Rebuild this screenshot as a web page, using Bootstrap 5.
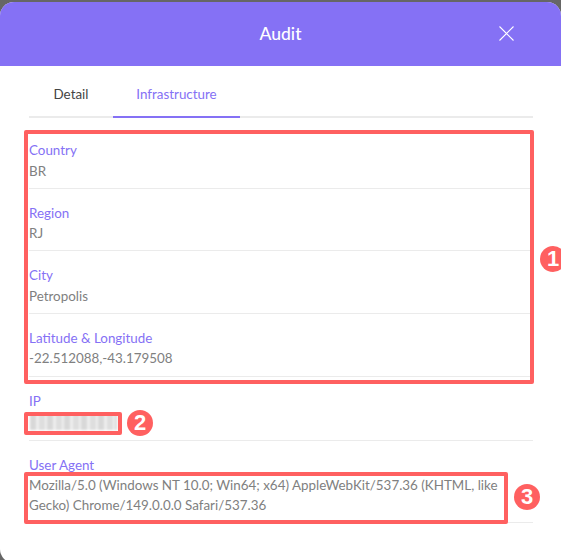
<!DOCTYPE html>
<html lang="en">
<head>
<meta charset="utf-8">
<title>Audit</title>
<link href="https://cdn.jsdelivr.net/npm/bootstrap@5.3.0/dist/css/bootstrap.min.css" rel="stylesheet">
<style>
html, body { background: #fff; }
body { font-family: "Lato", "Open Sans", sans-serif; }
.shot { width: 561px; height: 560px; background: #666; padding-top: 2px; overflow: hidden; position: relative; }
.sheet { background: #fff; border-radius: 14px 14px 0 14px; height: 561px; overflow: hidden; }
.sheet-head { background: #8571f5; height: 64px; color: #fff; font-size: 17.5px; font-weight: 500; }
.sheet-close { right: 47px; top: 24px; background: none; border: 0; padding: 0; line-height: 0; }
.sheet-body { padding: 13px 28px 0 29px; }
.tabs-line { border-bottom: 2px solid #ebebeb; height: 39px; font-size: 13.4px; }
.tab-item { display: block; height: 39px; width: 84px; text-align: center; line-height: 31px; color: #444; text-decoration: none; }
.tab-item.on { width: 127px; color: #8571f5; border-bottom: 2px solid #8571f5; }
.field-list { margin-top: 8px; }
.field { border-bottom: 1px solid #ebebeb; font-size: 13.4px; color: #808080; padding: 14px 0 7.17px; }
.field dt { font-weight: 400; color: #8571f5; margin: 0; line-height: 20px; }
.field dd { margin: 0; padding-top: .5px; line-height: 20px; }
.note { border: 4px solid #ff6060; border-radius: 2px; position: absolute; }
.note-a { left: 24px; top: 130px; width: 510px; height: 254px; }
.note-b { left: 24px; top: 412px; width: 98px; height: 23px; }
.note-c { left: 24px; top: 472px; width: 484px; height: 52px; }
.num { position: absolute; width: 26px; height: 26px; border-radius: 50%; background: #ff6060; color: #fff; font-weight: 700; font-size: 22px; line-height: 26px; text-align: center; font-family: "Liberation Sans", sans-serif; }
.num-a { left: 540px; top: 246px; }
.num-b { left: 127px; top: 410px; }
.num-c { left: 514px; top: 484px; }
.blurred { width: 87px; height: 16px; background: repeating-linear-gradient(90deg, #d8d8d8 0 6px, #eeeeee 6px 9px, #dedede 9px 15px, #f0f0f0 15px 17px); filter: blur(1.2px); margin: 3px 0 2.33px 1px; }
</style>
</head>
<body>
<div class="shot">
  <div class="sheet">
    <div class="sheet-head d-flex align-items-center justify-content-center position-relative">
      <span>Audit</span>
      <button class="sheet-close position-absolute" type="button" aria-label="Close">
        <svg width="15" height="15" viewBox="0 0 15 15"><path d="M.5.5 14.5 14.5M14.5.5.5 14.5" stroke="#fff" stroke-width="1.1" fill="none"/></svg>
      </button>
    </div>
    <div class="sheet-body">
      <nav class="tabs-line d-flex">
        <a class="tab-item" href="#">Detail</a>
        <a class="tab-item on" href="#">Infrastructure</a>
      </nav>
      <dl class="field-list mb-0 d-flex flex-column">
        <div class="field"><dt>Country</dt><dd>BR</dd></div>
        <div class="field"><dt>Region</dt><dd>RJ</dd></div>
        <div class="field"><dt>City</dt><dd>Petropolis</dd></div>
        <div class="field"><dt>Latitude &amp; Longitude</dt><dd>-22.512088,-43.179508</dd></div>
        <div class="field"><dt>IP</dt><dd><div class="blurred"></div></dd></div>
        <div class="field"><dt>User Agent</dt><dd>Mozilla/5.0 (Windows NT 10.0; Win64; x64) AppleWebKit/537.36 (KHTML, like Gecko) Chrome/149.0.0.0 Safari/537.36</dd></div>
      </dl>
    </div>
  </div>
  <div class="note note-a"></div>
  <div class="num num-a">1</div>
  <div class="note note-b"></div>
  <div class="num num-b">2</div>
  <div class="note note-c"></div>
  <div class="num num-c">3</div>
</div>
</body>
</html>
